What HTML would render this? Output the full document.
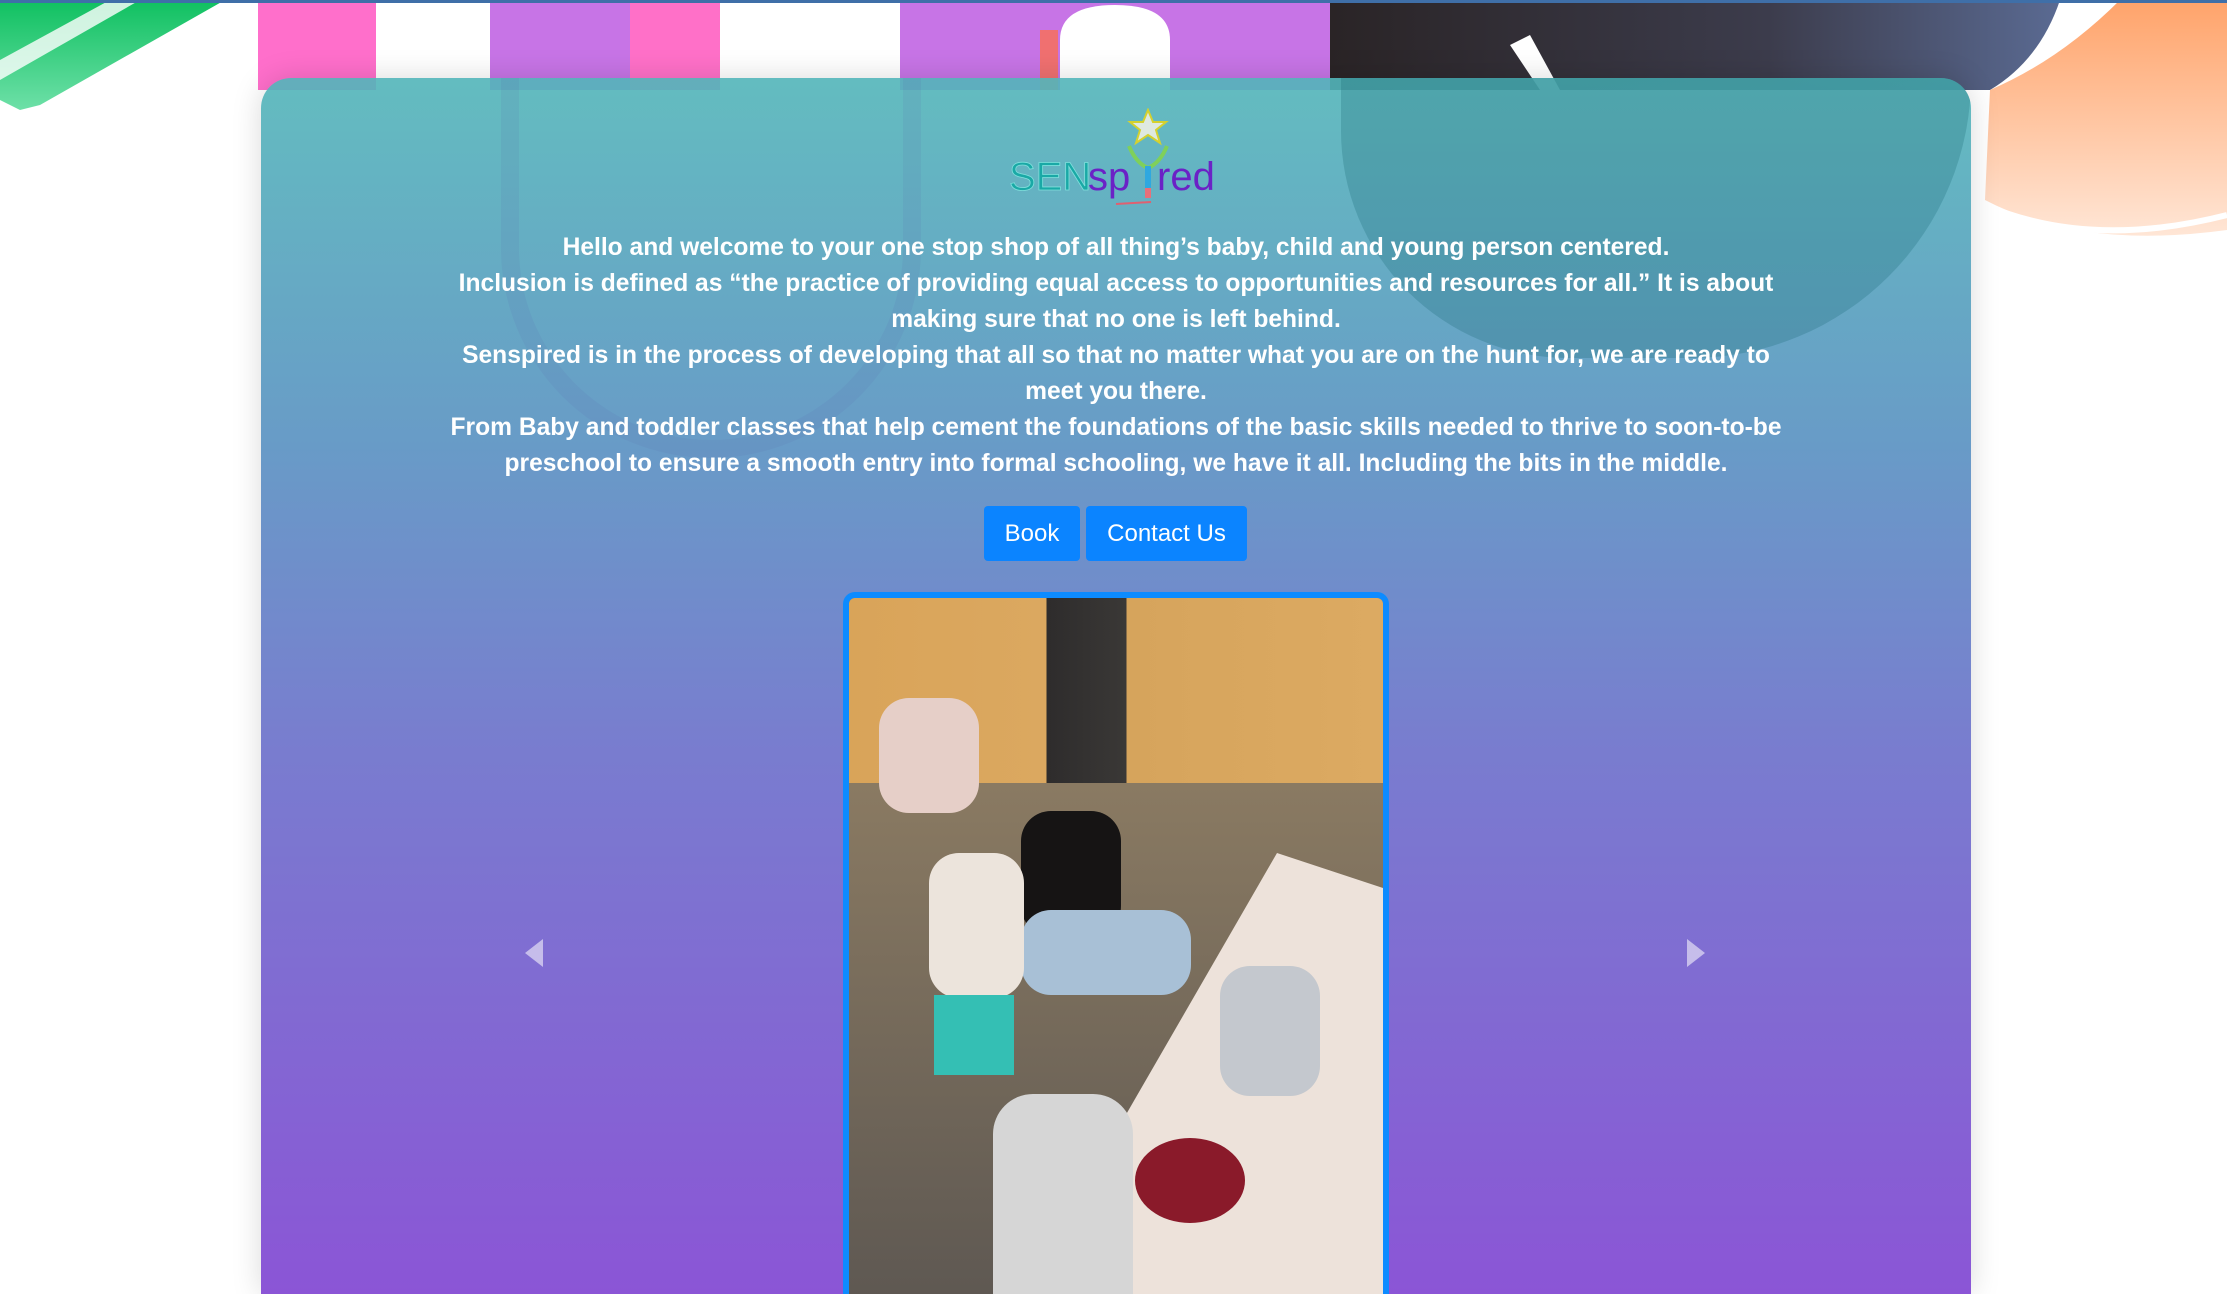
<!DOCTYPE html>
<html><head><meta charset="utf-8">
<style>
*{margin:0;padding:0;box-sizing:border-box}
html,body{width:2227px;height:1294px;overflow:hidden;background:#fff;font-family:"Liberation Sans",sans-serif}
.topline{position:absolute;left:0;top:0;width:2227px;height:3px;background:#3f6fa8;z-index:5}
.bg{position:absolute;left:0;top:0;width:2227px;height:300px;overflow:hidden}
.card{position:absolute;left:261px;top:78px;width:1710px;height:1216px;border-radius:30px 30px 0 0;
background:linear-gradient(180deg,rgba(82,181,185,.9) 0%,rgba(96,150,196,.95) 30%,rgba(118,122,206,.98) 55%,rgba(139,85,214,1) 100%);
box-shadow:0 0 30px rgba(0,0,0,.15);overflow:hidden}
.txt{position:absolute;left:0;width:1710px;top:152px;text-align:center;color:#fff;font-weight:bold;font-size:24.6px;line-height:36px}
.btn{position:absolute;top:428px;height:55px;background:#0b84ff;color:#fff;font-size:24px;line-height:55px;text-align:center;border-radius:4px}
.frame{position:absolute;left:582px;top:514px;width:546px;height:702px;border:6px solid #0d8bff;border-bottom:none;border-radius:12px 12px 0 0;overflow:hidden;background:#7d6f60}
.arrow{position:absolute;top:861px;width:0;height:0;border-top:14px solid transparent;border-bottom:14px solid transparent}
.f{position:absolute}
</style></head><body>
<div class="topline"></div>
<div class="bg">
  <svg width="2227" height="300" style="position:absolute;left:0;top:0">
    <defs>
      <linearGradient id="g1" x1="0" y1="0" x2="0" y2="1"><stop offset="0" stop-color="#0fc060"/><stop offset="1" stop-color="#6ee0a8"/></linearGradient>
      <linearGradient id="g2" x1="0" y1="0" x2="0" y2="1"><stop offset="0" stop-color="#ffa36a"/><stop offset="1" stop-color="#ffe6d6"/></linearGradient>
      <linearGradient id="g3" x1="0" y1="0" x2="1" y2="0"><stop offset="0" stop-color="#2a2426"/><stop offset=".6" stop-color="#3c3c4c"/><stop offset="1" stop-color="#5a6a92"/></linearGradient>
    </defs>
    <polygon points="0,0 225,0 40,105 20,110 0,100" fill="url(#g1)"/>
    <polygon points="0,60 110,0 140,0 0,80" fill="#fff" opacity=".8"/>
    <rect x="258" y="0" width="118" height="90" fill="#ff6fcb"/>
    <rect x="490" y="0" width="230" height="90" fill="#c774e6"/>
    <rect x="630" y="0" width="90" height="90" fill="#ff70c8"/>
    <path d="M900,0 H1330 V90 H900 Z" fill="#c774e6"/>
    <path d="M1060,90 V40 Q1060,5 1115,5 Q1170,5 1170,40 V90 Z" fill="#fff"/>
    <rect x="1040" y="30" width="18" height="60" fill="#f07070"/>
    <path d="M1330,0 H2060 Q2040,60 1990,90 H1330 Z" fill="url(#g3)"/>
    <path d="M1510,45 L1530,35 L1560,90 L1540,90 Z" fill="#fff"/>
    <path d="M1990,90 Q2060,60 2120,0 H2227 V230 Q2080,250 1985,200 Z" fill="url(#g2)"/>
    <path d="M1985,205 Q2090,250 2227,215" stroke="#fff" stroke-width="6" fill="none"/>
  </svg>
</div>
<div class="card">
  <div style="position:absolute;left:1080px;top:0;width:630px;height:280px;background:rgba(20,100,110,.25);border-radius:0 0 320px 260px"></div>
  <div style="position:absolute;left:240px;top:0;width:420px;height:380px;border:18px solid rgba(90,110,170,.12);border-top:none;border-radius:0 0 210px 210px"></div>
  <svg style="position:absolute;left:740px;top:30px" width="230" height="100" viewBox="0 0 230 100">
    <polygon points="147,2 152,14 165,14 155,22 159,35 147,27 135,35 139,22 129,14 142,14" fill="#dfe9e0" stroke="#d5d12e" stroke-width="2"/>
    <path d="M128,38 Q135,55 147,60 Q159,55 166,38" fill="none" stroke="#7fd05a" stroke-width="4"/>
    <rect x="144" y="58" width="6" height="32" fill="#2fa8e0"/>
    <rect x="144" y="80" width="6" height="10" fill="#e8707a"/>
    <line x1="115" y1="96" x2="150" y2="94" stroke="#e06070" stroke-width="2"/>
    <text x="8" y="82" font-family="Liberation Sans,sans-serif" font-size="40" fill="#1aa9a6" stroke="#7fe0dc" stroke-width=".8">SEN</text>
    <text x="87" y="82" font-family="Liberation Sans,sans-serif" font-size="40" fill="#6b22c6">sp</text>
    <text x="156" y="82" font-family="Liberation Sans,sans-serif" font-size="40" fill="#6b22c6">red</text>
  </svg>
  <div class="txt">Hello and welcome to your one stop shop of all thing’s baby, child and young person centered.<br>Inclusion is defined as “the practice of providing equal access to opportunities and resources for all.” It is about<br>making sure that no one is left behind.<br>Senspired is in the process of developing that all so that no matter what you are on the hunt for, we are ready to<br>meet you there.<br>From Baby and toddler classes that help cement the foundations of the basic skills needed to thrive to soon-to-be<br>preschool to ensure a smooth entry into formal schooling, we have it all. Including the bits in the middle.</div>
  <div class="btn" style="left:723px;width:96px">Book</div>
  <div class="btn" style="left:825px;width:161px">Contact Us</div>
  <div class="arrow" style="left:264px;border-right:18px solid rgba(255,255,255,.55)"></div>
  <div class="arrow" style="left:1426px;border-left:18px solid rgba(255,255,255,.55)"></div>
  <div class="frame">
    <div class="f" style="left:0;top:0;width:100%;height:185px;background:linear-gradient(90deg,#d9a459,#dba860 37%,#2e2c2c 37%,#3a3836 52%,#d6a45c 52%,#dcaa62)"></div>
    <div class="f" style="left:0;top:185px;width:100%;height:517px;background:linear-gradient(#8a7a62,#5e5852)"></div>
    <div class="f" style="left:0;top:0;width:534px;height:702px;background:#ede2da;clip-path:polygon(428px 255px,534px 290px,534px 702px,170px 702px)"></div>
    <div class="f" style="left:30px;top:100px;width:100px;height:115px;background:#e6cfc8;border-radius:30px"></div>
    <div class="f" style="left:172px;top:213px;width:100px;height:125px;background:#161414;border-radius:30px"></div>
    <div class="f" style="left:172px;top:312px;width:170px;height:85px;background:#a8c0d6;border-radius:30px"></div>
    <div class="f" style="left:80px;top:255px;width:95px;height:145px;background:#ece4dc;border-radius:30px"></div>
    <div class="f" style="left:85px;top:397px;width:80px;height:80px;background:#34bfb4"></div>
    <div class="f" style="left:371px;top:368px;width:100px;height:130px;background:#c4c8ce;border-radius:30px"></div>
    <div class="f" style="left:286px;top:540px;width:110px;height:85px;background:#8a1a2a;border-radius:50%"></div>
    <div class="f" style="left:144px;top:496px;width:140px;height:206px;background:#d6d6d6;border-radius:40px 40px 0 0"></div>
  </div>
</div>
</body></html>
